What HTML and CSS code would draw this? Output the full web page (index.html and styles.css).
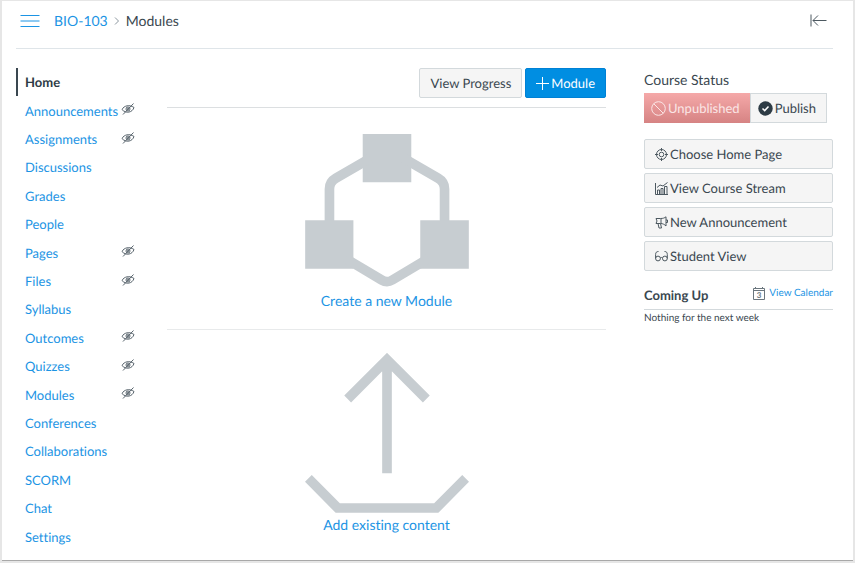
FILE: index.html
```html
<!doctype html>
<html lang="en">
<head>
	<meta charset="UTF-8">
	<meta name="viewport" content="width=device-width, initial-scale=1.0">
	<title>BIO-103 Modules</title>
	<link rel="stylesheet" href="styles.css">
</head>
<body>
	<!-- shared icon shapes -->
	<svg class="sprite" aria-hidden="true">
		<symbol id="hidden-eye" viewBox="0 0 14 12">
			<path d="M1 6.5C3 2.6 8.500 1.300 13 4.500C11.500 9.500 5 11 1 6.500Z"/>
			<circle cx="7" cy="6" r="2"/>
			<circle cx="7" cy="6" r=".6"/>
			<path d="M2 11.500L12.500 .500"/>
		</symbol>
	</svg>
	<div class="page">
		<header class="header">
			<button class="icon-button" type="button" aria-label="Course menu">
				<svg class="menu-icon" width="20" height="14" viewBox="0 0 20 14"><path d="M.5 1.500H19.500M.5 7H19.500M.5 12.500H19.500"/></svg>
			</button>
			<nav class="crumbs">
				<a href="#">BIO-103</a>
				<svg class="chevron" width="6" height="8" viewBox="0 0 6 8"><path d="M1 .5L4.500 4L1 7.500"/></svg>
				<span>Modules</span>
			</nav>
			<button class="icon-button collapse" type="button" aria-label="Collapse sidebar">
				<svg class="line-icon" width="17" height="13" viewBox="0 0 17 13"><path d="M1 .5V12.500M3 6.500H16.500M8 1.500L3 6.500L8 11.500"/></svg>
			</button>
		</header>
		<div class="content">
			<nav class="course-nav">
				<ul>
					<li><a class="current" href="#">Home</a></li>
					<li><a href="#">Announcements</a><svg class="eye"><use href="#hidden-eye"/></svg></li>
					<li><a href="#">Assignments</a><svg class="eye"><use href="#hidden-eye"/></svg></li>
					<li><a href="#">Discussions</a></li>
					<li><a href="#">Grades</a></li>
					<li><a href="#">People</a></li>
					<li><a href="#">Pages</a><svg class="eye"><use href="#hidden-eye"/></svg></li>
					<li><a href="#">Files</a><svg class="eye"><use href="#hidden-eye"/></svg></li>
					<li><a href="#">Syllabus</a></li>
					<li><a href="#">Outcomes</a><svg class="eye"><use href="#hidden-eye"/></svg></li>
					<li><a href="#">Quizzes</a><svg class="eye"><use href="#hidden-eye"/></svg></li>
					<li><a href="#">Modules</a><svg class="eye"><use href="#hidden-eye"/></svg></li>
					<li><a href="#">Conferences</a></li>
					<li><a href="#">Collaborations</a></li>
					<li><a href="#">SCORM</a></li>
					<li><a href="#">Chat</a></li>
					<li><a href="#">Settings</a></li>
				</ul>
			</nav>
			<main class="main">
				<div class="toolbar">
					<button class="btn" type="button">View Progress</button>
					<button class="btn btn-primary" type="button">
						<svg width="13" height="13" viewBox="0 0 13 13"><path d="M6.500 0V13M0 6.500H13"/></svg>Module
					</button>
				</div>
				<a class="start new-module" href="#">
					<svg width="164" height="153" viewBox="44 41 492 460">
						<path class="fill" d="M217 41H363V186H217ZM44 300H189V446H44ZM390 300H536V446H390Z"/>
						<path class="stroke" d="M240 114L136 174Q117 185 117 206V310M340 114L444 174Q463 185 463 206V310M165 415L274 480Q290 490 306 480L415 415"/>
					</svg>
					Create a new Module
				</a>
				<a class="start add-content" href="#">
					<svg width="164" height="160" viewBox="44 98 492 480">
						<path class="stroke" d="M172 236L290 118L408 236M290 118V459M54 474L142 563H438L526 474"/>
					</svg>
					Add existing content
				</a>
			</main>
			<aside class="sidebar">
				<h2 class="status-title">Course Status</h2>
				<div class="status">
					<button class="status-btn unpublished" type="button" disabled>
						<svg width="15" height="15" viewBox="0 0 15 15"><circle cx="7.500" cy="7.500" r="6.800"/><path d="M2.700 2.700L12.300 12.300"/></svg>Unpublished
					</button>
					<button class="status-btn publish" type="button">
						<svg width="15" height="15" viewBox="0 0 15 15"><circle cx="7.500" cy="7.500" r="7.200"/><path d="M4.500 7.500L6.700 9.600L10.500 5.500"/></svg>Publish
					</button>
				</div>
				<div class="actions">
					<button class="btn" type="button">
						<svg class="line-icon" width="13" height="13" viewBox="0 0 13 13"><circle cx="6.500" cy="6.500" r="5"/><circle cx="6.500" cy="6.500" r="2.300"/><path d="M6.500 0V3M6.500 10V13M0 6.500H3M10 6.500H13"/></svg>Choose Home Page
					</button>
					<button class="btn" type="button">
						<svg class="line-icon" width="13" height="13" viewBox="0 0 13 13"><path d="M.5 1V12.500H13M2.500 12V8H4.500V12M6 12V6.500H8V12M9.500 12V4.500H12V12M2 5.500L5 3L8 4L12.500 .5"/></svg>View Course Stream
					</button>
					<button class="btn" type="button">
						<svg class="line-icon" width="13" height="13" viewBox="0 0 13 13"><path d="M1 2.500H5.500C8 2.500 9.500 2 11 .8V10C9.500 8.500 8 7.500 5.500 7.500H1L2 5ZM3 7.500L4 12H6.500L5.500 7.500M6 2.500V7.500M11 4H12.500V6.500H11"/></svg>New Announcement
					</button>
					<button class="btn" type="button">
						<svg class="line-icon" width="13" height="13" viewBox="0 0 13 13"><circle cx="3" cy="8.500" r="2.400"/><circle cx="9.900" cy="8.500" r="2.400"/><path d="M.6 8.500V4.500C.6 2.500 1.500 1.500 3.500 1.500M12.300 8.500V4.500C12.300 2.500 11.500 1.500 9.500 1.500M5.300 8C6 7.300 6.800 7.300 7.500 8"/></svg>Student View
					</button>
				</div>
				<div class="coming-up">
					<h2>Coming Up</h2>
					<a href="#">
						<svg width="12" height="13" viewBox="0 0 12 13"><path d="M.5 1.500H11.500V12.500H.5ZM.5 3.500H11.500M2.500 0V2M9.500 0V2"/><text x="6" y="11" text-anchor="middle">3</text></svg>View Calendar
					</a>
				</div>
				<p class="nothing">Nothing for the next week</p>
			</aside>
		</div>
	</div>
</body>
</html>
```

FILE: styles.css
```css
* {
	box-sizing: border-box;
}

body {
	display: flex;
	min-height: 100vh;
	margin: 0;
	padding: 1px 2px 2px 2px;
	background-color: #e6e6e6;
	color: #3a4750;
	font: 400 13px/20px Lato, "Liberation Sans", sans-serif;
	font-variant-ligatures: none;
	text-rendering: geometricPrecision;
}

a {
	color: #1c94e4;
	text-decoration: none;
}

h2,
p,
ul {
	margin: 0;
	padding: 0;
}

ul {
	list-style: none;
}

button {
	font: inherit;
	font-variant-ligatures: none;
	text-rendering: inherit;
	color: inherit;
}

svg {
	flex: none;
	fill: none;
	stroke: currentColor;
}

.sprite {
	position: absolute;
	width: 0;
	height: 0;
}

.page {
	display: flex;
	flex: 1;
	flex-direction: column;
	padding: 0 20px 9px 14px;
	border-bottom: 1px solid #a8a8a8;
	background-color: #fff;
}

.header {
	display: flex;
	align-items: center;
	height: 48px;
	padding: 0 6px 8px 4px;
	border-bottom: 1px solid #dfe5e9;
}

.icon-button {
	display: flex;
	padding: 0;
	border: 0;
	background: none;
}

.menu-icon {
	color: #1c94e4;
}

.crumbs {
	display: flex;
	align-items: center;
	gap: 6px;
	margin-left: 14px;
	font-size: 14px;
}

.chevron {
	color: #8b969e;
}

.collapse {
	margin-left: auto;
}

.line-icon {
	color: #4c5860;
}

.content {
	display: flex;
	flex: 1;
	padding-top: 19px;
}

.course-nav {
	display: flex;
	width: 151px;
}

.course-nav ul {
	display: flex;
	flex-direction: column;
	width: 119px;
}

.course-nav li {
	display: flex;
	flex: 1;
	align-items: center;
	justify-content: space-between;
	min-height: 28px;
}

.course-nav a {
	padding: 4px 0 4px 9px;
}

.course-nav .current {
	padding-left: 7px;
	border-left: 2px solid #3a4750;
	color: #2d3b45;
	font-weight: 700;
}

.eye {
	width: 14px;
	height: 12px;
	margin-bottom: 3px;
	color: #55616a;
}

.main {
	flex: 1;
}

.toolbar {
	display: flex;
	justify-content: flex-end;
	gap: 3px;
	padding-bottom: 9px;
	border-bottom: 1px solid #dcdfe1;
}

.btn {
	display: flex;
	align-items: center;
	gap: 2px;
	height: 30px;
	padding: 0 10px;
	border: 1px solid #d3d9dc;
	border-radius: 2px;
	background-color: #f5f5f5;
}

.btn-primary {
	border-color: #0081d5;
	background-color: #008ee2;
	color: #fff;
}

.start {
	display: flex;
	flex-direction: column;
	align-items: center;
	font-size: 14px;
}

.start svg {
	color: #c7cdd1;
}

.start .fill {
	fill: currentColor;
	stroke: none;
}

.start .stroke {
	stroke-width: 29px;
}

.new-module {
	gap: 4px;
	padding: 26px 0 18px;
	border-bottom: 1px solid #e8eaeb;
}

.add-content {
	gap: 2px;
	padding-top: 23px;
}

.sidebar {
	width: 189px;
	margin-left: 38px;
}

.status-title {
	padding: 2px 0 3px;
	font-size: 14px;
	font-weight: 400;
}

.status {
	display: flex;
}

.status-btn {
	display: flex;
	align-items: center;
	gap: 2px;
	height: 30px;
	padding: 0 10px 0 7px;
	border: 1px solid #d3d9dc;
	background-color: #f5f5f5;
}

.unpublished {
	border: 0;
	background: linear-gradient(#f5a9a9, #d68383);
	color: #fbe6e6;
}

.publish circle {
	fill: #2d3b45;
	stroke: none;
}

.publish path {
	stroke: #fff;
	stroke-width: 1.5px;
}

.actions {
	display: flex;
	flex-direction: column;
	gap: 4px;
	margin-top: 16px;
}

.coming-up {
	display: flex;
	justify-content: space-between;
	margin-top: 10px;
	padding-bottom: 4px;
	border-bottom: 1px solid #d3d9dc;
}

.coming-up h2 {
	padding-top: 4px;
	font-size: 13px;
}

.coming-up a {
	display: flex;
	align-items: center;
	gap: 4px;
	font-size: 10px;
}

.coming-up svg {
	color: #6b767e;
}

.coming-up text {
	fill: currentColor;
	stroke: none;
	font-size: 8px;
	font-weight: 700;
}

.nothing {
	font-size: 10px;
	line-height: 16px;
}
```
